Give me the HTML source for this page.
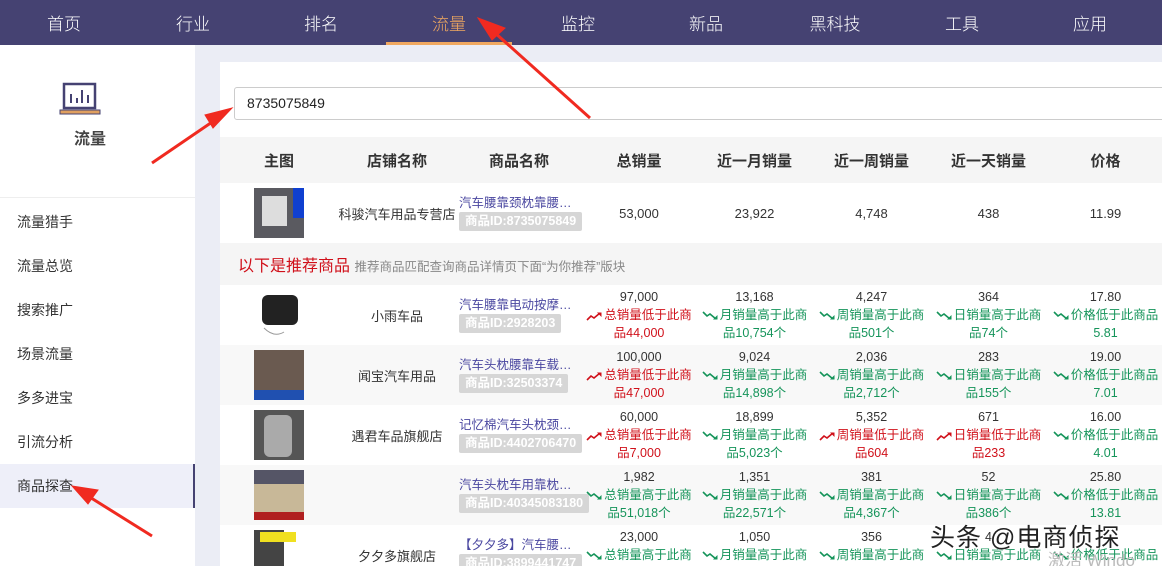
<!DOCTYPE html>
<html><head><meta charset="utf-8">
<style>
*{margin:0;padding:0;box-sizing:border-box}
html,body{width:1162px;height:566px;overflow:hidden}
body{position:relative;background:#ebedf5;font-family:"Liberation Sans","Noto Sans CJK SC",sans-serif;font-size:13px;color:#333}
.nav{position:absolute;left:0;top:0;width:1162px;height:45px;background:#454272}
.nav span{position:absolute;top:10px;font-size:17px;color:#fff;transform:translateX(-50%);font-weight:300}
.nav .on{color:#f0a860}
.navline{position:absolute;left:386px;top:42px;width:126px;height:3px;background:#f0a860}
.side{position:absolute;left:0;top:45px;width:195px;height:521px;background:#fff}
.side .it{position:absolute;left:0;width:195px;height:44px;line-height:44px;padding-left:17px;font-size:14px;color:#333}
.side .act{background:#eeeff9;border-right:2px solid #454272}
.panel{position:absolute;left:220px;top:62px;width:942px;height:504px;background:#fff}
.search{position:absolute;left:234px;top:87px;width:940px;height:33px;border:1px solid #ccc;border-radius:3px;background:#fff;font-size:14px;line-height:31px;padding-left:12px;color:#222}
.wrap{position:absolute;left:220px;top:137px;width:942px;height:429px;overflow:hidden}
table{border-collapse:collapse;table-layout:fixed;width:944px}
td,th{width:118px;text-align:center;vertical-align:middle;padding:0;white-space:nowrap;overflow:hidden}
th{height:46px;font-size:15px;font-weight:bold;color:#333;background:#f5f5f5}
tr.r{height:60px}
tr.g{background:#f8f8f8}
.im{display:block;width:50px;height:50px;margin:0 auto}
.pn{font-size:12.5px;color:#4a47a0;text-align:left;padding-left:121px;line-height:17px;overflow:visible}
.pn{padding-left:3px}
.id{display:inline-block;background:#d6d6d6;color:#fff;font-weight:bold;font-size:12.5px;padding:0 6px;line-height:19px;border-radius:2px}
.st{font-size:12.5px;line-height:18px}
.rd{color:#d0101a}.gn{color:#15945a}
svg.a{width:17px;height:10px;vertical-align:middle;margin-right:1px}
.rec{height:42px;background:#f5f5f5;text-align:left;padding-left:18px;font-size:16px;color:#d0101a}
.rec small{font-size:12.5px;color:#888}
.wm{position:absolute;left:930px;top:518px;font-size:25px;color:#222;text-shadow:0 0 2px #fff,0 0 2px #fff;letter-spacing:1px}
</style></head><body>
<div class="nav">
<span style="left:64px">首页</span><span style="left:193px">行业</span><span style="left:321px">排名</span><span class="on" style="left:449px">流量</span><span style="left:578px">监控</span><span style="left:706px">新品</span><span style="left:835px">黑科技</span><span style="left:962px">工具</span><span style="left:1090px">应用</span>
</div>
<div class="navline"></div>
<div class="side">
<svg style="position:absolute;left:59px;top:37px" width="42" height="36" viewBox="0 0 42 36"><rect x="5" y="2" width="31" height="24" fill="none" stroke="#454272" stroke-width="2.5"/><path d="M12 12v9M18 16v5M23 8v13M29 13v8" stroke="#454272" stroke-width="2"/><rect x="1" y="28" width="40" height="4" fill="#e0a060" stroke="#454272" stroke-width="1"/></svg>
<div style="position:absolute;left:0;width:180px;top:80px;text-align:center;font-size:16px;font-weight:bold;color:#444">流量</div>
<div style="position:absolute;left:0;top:152px;width:195px;height:1px;background:#eee"></div>
<div class="it" style="top:155px">流量猎手</div>
<div class="it" style="top:199px">流量总览</div>
<div class="it" style="top:243px">搜索推广</div>
<div class="it" style="top:287px">场景流量</div>
<div class="it" style="top:331px">多多进宝</div>
<div class="it" style="top:375px">引流分析</div>
<div class="it act" style="top:419px">商品探查</div>
</div>
<div class="panel"></div>
<div class="search">8735075849</div>
<svg width="0" height="0" style="position:absolute"><defs>
<symbol id="up" viewBox="0 0 17 10"><path d="M1 9L5 5L8 7L14 2" fill="none" stroke="#d0101a" stroke-width="1.6"/><path d="M11 1.5h4.5v4.5z" fill="#d0101a"/></symbol>
<symbol id="dn" viewBox="0 0 17 10"><path d="M1 1L5 5L8 3L14 8" fill="none" stroke="#15945a" stroke-width="1.6"/><path d="M11 8.5h4.5v-4.5z" fill="#15945a"/></symbol>
</defs></svg>
<div class="wrap">
<table>
<colgroup><col style="width:118px"><col style="width:118px"><col style="width:126px"><col style="width:114px"><col style="width:117px"><col style="width:117px"><col style="width:117px"><col style="width:117px"></colgroup>
<tr><th>主图</th><th>店铺名称</th><th>商品名称</th><th>总销量</th><th>近一月销量</th><th>近一周销量</th><th>近一天销量</th><th>价格</th></tr>
<tr class="r"><td><svg class="im" viewBox="0 0 50 50"><rect width="50" height="50" fill="#5a5a60"/><rect x="8" y="8" width="25" height="30" fill="#ddd"/><rect x="39" y="0" width="11" height="30" fill="#1040d0"/></svg></td><td style="font-size:13px;overflow:visible">科骏汽车用品专营店</td><td class="pn">汽车腰靠颈枕靠腰…<br><span class="id">商品ID:8735075849</span></td><td>53,000</td><td>23,922</td><td>4,748</td><td>438</td><td>11.99</td></tr>
<tr><td colspan="8" class="rec">以下是推荐商品 <small>推荐商品匹配查询商品详情页下面“为你推荐”版块</small></td></tr>
<tr class="r"><td><svg class="im" viewBox="0 0 50 50"><rect width="50" height="50" fill="#fff"/><rect x="8" y="5" width="36" height="30" rx="6" fill="#222"/><path d="M10 38q10 10 20 4" stroke="#999" fill="none"/></svg></td><td>小雨车品</td><td class="pn">汽车腰靠电动按摩…<br><span class="id">商品ID:2928203</span></td>
<td class="st">97,000<br><span class="rd"><svg class="a"><use href="#up"/></svg>总销量低于此商<br>品44,000</span></td>
<td class="st">13,168<br><span class="gn"><svg class="a"><use href="#dn"/></svg>月销量高于此商<br>品10,754个</span></td>
<td class="st">4,247<br><span class="gn"><svg class="a"><use href="#dn"/></svg>周销量高于此商<br>品501个</span></td>
<td class="st">364<br><span class="gn"><svg class="a"><use href="#dn"/></svg>日销量高于此商<br>品74个</span></td>
<td class="st">17.80<br><span class="gn"><svg class="a"><use href="#dn"/></svg>价格低于此商品<br>5.81</span></td></tr>
<tr class="r g"><td><svg class="im" viewBox="0 0 50 50"><rect width="50" height="50" fill="#6a5a50"/><rect x="0" y="40" width="50" height="10" fill="#2050b0"/></svg></td><td>闻宝汽车用品</td><td class="pn">汽车头枕腰靠车载…<br><span class="id">商品ID:32503374</span></td>
<td class="st">100,000<br><span class="rd"><svg class="a"><use href="#up"/></svg>总销量低于此商<br>品47,000</span></td>
<td class="st">9,024<br><span class="gn"><svg class="a"><use href="#dn"/></svg>月销量高于此商<br>品14,898个</span></td>
<td class="st">2,036<br><span class="gn"><svg class="a"><use href="#dn"/></svg>周销量高于此商<br>品2,712个</span></td>
<td class="st">283<br><span class="gn"><svg class="a"><use href="#dn"/></svg>日销量高于此商<br>品155个</span></td>
<td class="st">19.00<br><span class="gn"><svg class="a"><use href="#dn"/></svg>价格低于此商品<br>7.01</span></td></tr>
<tr class="r"><td><svg class="im" viewBox="0 0 50 50"><rect width="50" height="50" fill="#555"/><rect x="10" y="5" width="28" height="42" rx="6" fill="#aaa"/></svg></td><td>遇君车品旗舰店</td><td class="pn">记忆棉汽车头枕颈…<br><span class="id">商品ID:4402706470</span></td>
<td class="st">60,000<br><span class="rd"><svg class="a"><use href="#up"/></svg>总销量低于此商<br>品7,000</span></td>
<td class="st">18,899<br><span class="gn"><svg class="a"><use href="#dn"/></svg>月销量高于此商<br>品5,023个</span></td>
<td class="st">5,352<br><span class="rd"><svg class="a"><use href="#up"/></svg>周销量低于此商<br>品604</span></td>
<td class="st">671<br><span class="rd"><svg class="a"><use href="#up"/></svg>日销量低于此商<br>品233</span></td>
<td class="st">16.00<br><span class="gn"><svg class="a"><use href="#dn"/></svg>价格低于此商品<br>4.01</span></td></tr>
<tr class="r g"><td><svg class="im" viewBox="0 0 50 50"><rect width="50" height="50" fill="#c8b898"/><rect x="0" y="0" width="50" height="14" fill="#556"/><rect x="0" y="42" width="50" height="8" fill="#b02020"/></svg></td><td></td><td class="pn">汽车头枕车用靠枕…<br><span class="id">商品ID:40345083180</span></td>
<td class="st">1,982<br><span class="gn"><svg class="a"><use href="#dn"/></svg>总销量高于此商<br>品51,018个</span></td>
<td class="st">1,351<br><span class="gn"><svg class="a"><use href="#dn"/></svg>月销量高于此商<br>品22,571个</span></td>
<td class="st">381<br><span class="gn"><svg class="a"><use href="#dn"/></svg>周销量高于此商<br>品4,367个</span></td>
<td class="st">52<br><span class="gn"><svg class="a"><use href="#dn"/></svg>日销量高于此商<br>品386个</span></td>
<td class="st">25.80<br><span class="gn"><svg class="a"><use href="#dn"/></svg>价格低于此商品<br>13.81</span></td></tr>
<tr class="r"><td><svg class="im" viewBox="0 0 50 50"><rect width="50" height="50" fill="#fff"/><rect x="0" y="0" width="30" height="50" fill="#444"/><rect x="6" y="2" width="36" height="10" fill="#f0e020"/></svg></td><td>夕夕多旗舰店</td><td class="pn">【夕夕多】汽车腰…<br><span class="id">商品ID:3899441747</span></td>
<td class="st">23,000<br><span class="gn"><svg class="a"><use href="#dn"/></svg>总销量高于此商<br>品</span></td>
<td class="st">1,050<br><span class="gn"><svg class="a"><use href="#dn"/></svg>月销量高于此商<br>品</span></td>
<td class="st">356<br><span class="gn"><svg class="a"><use href="#dn"/></svg>周销量高于此商<br>品</span></td>
<td class="st">4<br><span class="gn"><svg class="a"><use href="#dn"/></svg>日销量高于此商<br>品</span></td>
<td class="st">&nbsp;<br><span class="gn"><svg class="a"><use href="#dn"/></svg>价格低于此商品<br>&nbsp;</span></td></tr>
</table>
</div>
<div class="wm">头条 @电商侦探</div>
<div style="position:absolute;left:1048px;top:546px;font-size:17px;color:#bbb">激活 Windo</div>
<svg style="position:absolute;left:0;top:0" width="1162" height="566">
<g fill="#f02a20" stroke="#f02a20">
<path d="M590 118L494 32" stroke-width="3"/><path d="M478 18L505 28L492 40z"/>
<path d="M152 163L218 118" stroke-width="3"/><path d="M232 108L213 128L205 115z"/>
<path d="M152 536L88 496" stroke-width="3"/><path d="M72 486L98 490L88 504z"/>
</g>
</svg>
</body></html>
